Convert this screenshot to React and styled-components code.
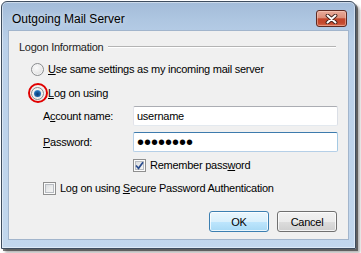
import React from 'react';
import styled, { createGlobalStyle } from 'styled-components';

const FONT = '"Liberation Sans", Arial, sans-serif';

const Global = createGlobalStyle`
  html, body { margin: 0; padding: 0; background: #ffffff; }
  body { font-family: ${FONT}; font-size: 11px; letter-spacing: -0.25px; color: #000; }
  #root { width: 361px; height: 253px; overflow: hidden; }
`;

const Stage = styled.div`
  width: 361px;
  height: 253px;
  box-sizing: border-box;
  padding: 1px 0 0 1px;
  background: #fff;
`;

const Window = styled.div`
  width: 355px;
  height: 248px;
  box-sizing: border-box;
  border: 1px solid #3e4d5f;
  border-radius: 6px 6px 0 0;
  background: linear-gradient(180deg, #a3bcd9 0px, #aec6e1 18px, #bad0e9 40px, #c2d7ed 100%);
  box-shadow: inset 0 0 0 1px rgba(255, 255, 255, 0.45), 2px 2px 0 rgba(40, 40, 40, 0.6),
    4px 4px 3px rgba(0, 0, 0, 0.3);
  display: flex;
  flex-direction: column;
  padding: 0 6px 8px 6px;
`;

const TitleBar = styled.div`
  height: 28px;
  flex: none;
  display: flex;
  align-items: flex-start;
  justify-content: space-between;
`;

const Title = styled.div`
  margin: 9px 0 0 4px;
  font-size: 12px;
  letter-spacing: 0;
  line-height: 16px;
  color: #000;
  text-shadow: 0 0 6px rgba(255, 255, 255, 0.8);
`;

const CloseButton = styled.div`
  width: 31px;
  height: 17px;
  margin: 8px 2px 0 0;
  box-sizing: border-box;
  border: 1px solid #5e2a22;
  border-radius: 3px;
  background: linear-gradient(180deg, #e8ab9b 0%, #dc8f7a 45%, #c2452b 52%, #c4492e 80%, #d66b4f 100%);
  box-shadow: inset 0 0 0 1px rgba(255, 215, 200, 0.45);
  display: flex;
  align-items: center;
  justify-content: center;
`;

const Client = styled.div`
  flex: 1;
  background: #f0f0f0;
  border: 1px solid #a2b5cc;
  display: flex;
  flex-direction: column;
`;

const GroupHeader = styled.div`
  display: flex;
  align-items: center;
  gap: 5px;
  height: 14px;
  margin: 9px 12px 0 10px;
  color: #1e1e1e;
`;

const GroupLine = styled.div`
  flex: 1;
  height: 0;
  border-top: 1px solid #b4b4b4;
  border-bottom: 1px solid #ffffff;
`;

const OptionRow = styled.div`
  display: flex;
  align-items: center;
  gap: 4px;
  height: 16px;
  margin: ${(p) => p.$mt}px 0 0 ${(p) => p.$ml}px;
`;

const RadioWrap = styled.span`
  position: relative;
  display: flex;
  flex: none;
`;

const RadioCircle = styled.span`
  width: 13px;
  height: 13px;
  border-radius: 50%;
  box-sizing: border-box;
  flex: none;
  border: 1px solid #8a8c8e;
  background: radial-gradient(circle at 40% 35%, #fbfbfb 0%, #e9e9e9 50%, #cfd1d4 100%);
  box-shadow: inset 0 0 0 1px #f4f4f4;
  display: flex;
  align-items: center;
  justify-content: center;
`;

const RadioDot = styled.span`
  width: 7px;
  height: 7px;
  border-radius: 50%;
  background: radial-gradient(circle at 50% 60%, #0a3a72 0%, #1b66ae 50%, #7fc8f2 100%);
`;

const Ring = styled.span`
  position: absolute;
  left: -3.5px;
  top: -3.5px;
  width: 20px;
  height: 20px;
  box-sizing: border-box;
  border: 2px solid #e00000;
  border-radius: 50%;
`;

const Box = styled.span`
  width: 13px;
  height: 13px;
  box-sizing: border-box;
  flex: none;
  border: 1px solid #8f8f8f;
  background: linear-gradient(135deg, #d3d6da 0%, #eceded 55%, #f8f8f8 100%);
  box-shadow: inset 0 0 0 1px #fbfbfb, inset 0 0 0 2px #b8bcc2;
  display: flex;
  align-items: center;
  justify-content: center;
`;

const Form = styled.div`
  display: grid;
  grid-template-columns: 90px 205px;
  grid-auto-rows: auto;
  row-gap: 6px;
  align-items: center;
  margin: 5px 0 0 34px;
`;

const FieldLabel = styled.div`
  line-height: 14px;
`;

const Field = styled.div`
  height: 20px;
  box-sizing: border-box;
  background: #fff;
  border: 1px solid;
  border-color: ${(p) =>
    p.$focused ? '#3d7bad #a4c9e3 #b5cfe7 #b5cfe7' : '#abadb3 #dbdfe6 #e3e9ef #e2e3ea'};
  border-radius: 2px;
  padding: 0 3px;
  display: flex;
  align-items: center;
  font-size: 11px;
  white-space: nowrap;
  overflow: hidden;
`;

const Dots = styled.span`
  font-size: 20px;
  letter-spacing: 0;
  line-height: 18px;
  color: #000;
`;

const CheckCell = styled.div`
  display: flex;
  align-items: center;
  gap: 4px;
  height: 14px;
`;

const ButtonRow = styled.div`
  display: flex;
  justify-content: flex-end;
  gap: 8px;
  margin: 15px 11px 0 0;
`;

const Button = styled.div`
  width: 60px;
  height: 21px;
  box-sizing: border-box;
  border: 1px solid ${(p) => (p.$default ? '#3c7fb1' : '#707070')};
  border-radius: 3px;
  background: ${(p) =>
    p.$default
      ? 'linear-gradient(180deg, #eaf6fd 0%, #d9f0fc 50%, #bee6fd 51%, #a7d9f5 100%)'
      : 'linear-gradient(180deg, #f2f2f2 0%, #ebebeb 50%, #dddddd 51%, #cfcfcf 100%)'};
  box-shadow: inset 0 0 0 1px rgba(255, 255, 255, 0.75);
  display: flex;
  align-items: center;
  justify-content: center;
  font-size: 11px;
  color: #000;
`;

const U = styled.span`
  text-decoration: underline;
  text-underline-offset: 1px;
`;

function CloseGlyph() {
  return (
    <svg width="13" height="10" viewBox="0 0 13 10">
      <path d="M2.5 1.5 L10.5 8.5 M10.5 1.5 L2.5 8.5" stroke="#40201a" strokeWidth="3.8" strokeLinecap="round" />
      <path d="M2.5 1.5 L10.5 8.5 M10.5 1.5 L2.5 8.5" stroke="#ffffff" strokeWidth="2" strokeLinecap="round" />
    </svg>
  );
}

function Check() {
  return (
    <svg width="9" height="9" viewBox="0 0 9 9">
      <path d="M1 4.5 L3.5 7.3 L8 1.2" fill="none" stroke="#2a4c8e" strokeWidth="1.7" />
    </svg>
  );
}

export default function App() {
  return (
    <>
      <Global />
      <Stage>
        <Window>
          <TitleBar>
            <Title>Outgoing Mail Server</Title>
            <CloseButton>
              <CloseGlyph />
            </CloseButton>
          </TitleBar>
          <Client>
            <GroupHeader>
              <span>Logon Information</span>
              <GroupLine />
            </GroupHeader>
            <OptionRow $mt={7} $ml={22}>
              <RadioWrap>
                <RadioCircle />
              </RadioWrap>
              <span>
                <U>U</U>se same settings as my incoming mail server
              </span>
            </OptionRow>
            <OptionRow $mt={8} $ml={22}>
              <RadioWrap>
                <RadioCircle>
                  <RadioDot />
                </RadioCircle>
                <Ring />
              </RadioWrap>
              <span>
                <U>L</U>og on using
              </span>
            </OptionRow>
            <Form>
              <FieldLabel>
                A<U>c</U>count name:
              </FieldLabel>
              <Field>username</Field>
              <FieldLabel>
                <U>P</U>assword:
              </FieldLabel>
              <Field $focused>
                <Dots>••••••••</Dots>
              </Field>
              <span />
              <CheckCell>
                <Box>
                  <Check />
                </Box>
                <span>
                  Remember pass<U>w</U>ord
                </span>
              </CheckCell>
            </Form>
            <OptionRow $mt={8} $ml={34}>
              <Box />
              <span>
                Log on using <U>S</U>ecure Password Authentication
              </span>
            </OptionRow>
            <ButtonRow>
              <Button $default>OK</Button>
              <Button>Cancel</Button>
            </ButtonRow>
          </Client>
        </Window>
      </Stage>
    </>
  );
}
